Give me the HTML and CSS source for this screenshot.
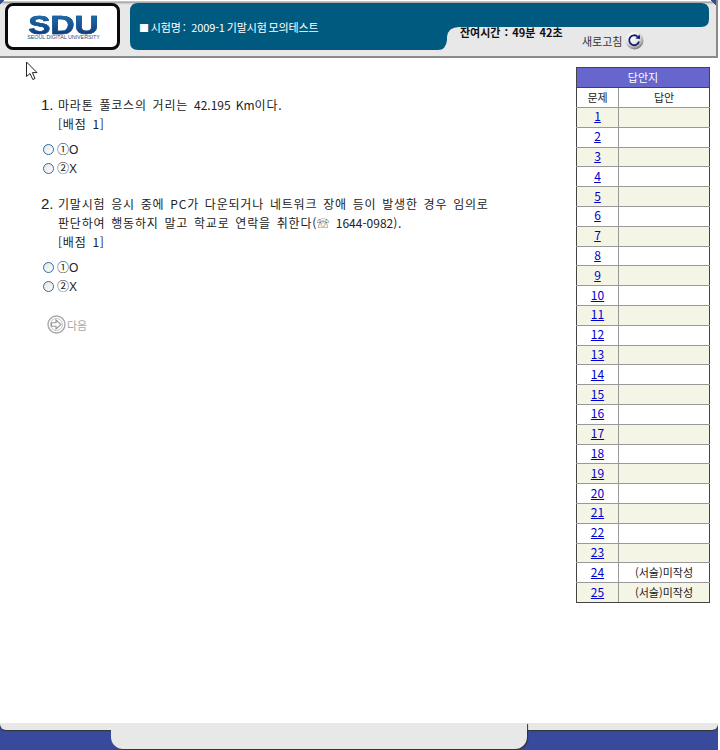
FILE: index.html
```html
<!DOCTYPE html>
<html lang="ko">
<head>
<meta charset="utf-8">
<title>시험</title>
<link rel="stylesheet" href="styles.css">
</head>
<body>
<div class="page">
  <header class="header">
    <div class="logo">
      <div class="logo-mark">SDU</div>
      <div class="logo-sub">SEOUL DIGITAL UNIVERSITY</div>
    </div>
    <div class="panel">
      <svg class="panel-shape" width="579" height="47" viewBox="0 0 579 47" aria-hidden="true">
        <path d="M8 0H571Q579 0 579 8V16Q579 24 571 24H329Q318 24 317 34V37Q316 47 308 47H8Q0 47 0 39V8Q0 0 8 0Z"/>
      </svg>
      <div class="exam-title"><span class="square">■</span> 시험명 :&nbsp;&nbsp; 2009-1 기말시험 모의테스트</div>
      <div class="status">
        <div class="timer">잔여시간 : 49분 42초</div>
        <div class="refresh">
          <span>새로고침</span>
          <svg width="20" height="20" viewBox="0 0 20 20" aria-hidden="true">
            <defs>
              <radialGradient id="ball" cx="38%" cy="28%" r="80%">
                <stop offset="0" stop-color="#ffffff"/>
                <stop offset=".5" stop-color="#e8e8e8"/>
                <stop offset=".8" stop-color="#a0a0a0"/>
                <stop offset="1" stop-color="#555555"/>
              </radialGradient>
            </defs>
            <circle cx="9.5" cy="9.5" r="9" fill="url(#ball)"/>
            <path d="M12.6 5.6A5 5 0 1 0 14 10.6" fill="none" stroke="#14206e" stroke-width="1.8"/>
            <path d="M10.4 7.4L15.2 8L14.6 3.6Z" fill="#14206e"/>
          </svg>
        </div>
      </div>
    </div>
  </header>

  <main class="main">
    <svg class="cursor" width="13" height="20" viewBox="0 0 13 20" aria-hidden="true">
      <path d="M1.5 1V15.5L5 12.5L7.8 18.5L10 17.5L7.4 11.6H12Z" fill="#fff" stroke="#222" stroke-width="1"/>
    </svg>
    <section class="questions">
      <div class="question">
        <div class="q-line">
          <span class="q-num">1.</span>
          <div class="q-text">마라톤 풀코스의 거리는 <span class="latin">42.195 Km</span>이다.<br>[배점 1]</div>
        </div>
        <label class="option"><input type="radio" name="q1"><span>①O</span></label>
        <label class="option"><input type="radio" name="q1"><span>②X</span></label>
      </div>
      <div class="question">
        <div class="q-line">
          <span class="q-num">2.</span>
          <div class="q-text">기말시험 응시 중에 PC가 다운되거나 네트워크 장애 등이 발생한 경우 임의로<br>판단하여 행동하지 말고 학교로 연락을 취한다(☏ <span class="latin">1644-0982</span>).<br>[배점 1]</div>
        </div>
        <label class="option"><input type="radio" name="q2"><span>①O</span></label>
        <label class="option"><input type="radio" name="q2"><span>②X</span></label>
      </div>
      <div class="next">
        <svg width="19" height="19" viewBox="0 0 19 19" aria-hidden="true">
          <circle cx="9.5" cy="9.5" r="8.5" fill="#fff" stroke="#a8a8a8" stroke-width="1.4"/>
          <circle cx="9.5" cy="9.5" r="6" fill="none" stroke="#c4c4c4" stroke-width="1"/>
          <path d="M4.5 7.8H9V5L14 9.5L9 14V11.2H4.5Z" fill="#fff" stroke="#999" stroke-width="1.1"/>
        </svg>
        <span>다음</span>
      </div>
    </section>

    <table class="answers">
      <colgroup><col class="col-no"><col class="col-ans"></colgroup>
      <thead>
        <tr class="title"><th colspan="2">답안지</th></tr>
        <tr class="heads"><th>문제</th><th>답안</th></tr>
      </thead>
      <tbody>
        <tr><td><a href="#">1</a></td><td></td></tr>
        <tr><td><a href="#">2</a></td><td></td></tr>
        <tr><td><a href="#">3</a></td><td></td></tr>
        <tr><td><a href="#">4</a></td><td></td></tr>
        <tr><td><a href="#">5</a></td><td></td></tr>
        <tr><td><a href="#">6</a></td><td></td></tr>
        <tr><td><a href="#">7</a></td><td></td></tr>
        <tr><td><a href="#">8</a></td><td></td></tr>
        <tr><td><a href="#">9</a></td><td></td></tr>
        <tr><td><a href="#">10</a></td><td></td></tr>
        <tr><td><a href="#">11</a></td><td></td></tr>
        <tr><td><a href="#">12</a></td><td></td></tr>
        <tr><td><a href="#">13</a></td><td></td></tr>
        <tr><td><a href="#">14</a></td><td></td></tr>
        <tr><td><a href="#">15</a></td><td></td></tr>
        <tr><td><a href="#">16</a></td><td></td></tr>
        <tr><td><a href="#">17</a></td><td></td></tr>
        <tr><td><a href="#">18</a></td><td></td></tr>
        <tr><td><a href="#">19</a></td><td></td></tr>
        <tr><td><a href="#">20</a></td><td></td></tr>
        <tr><td><a href="#">21</a></td><td></td></tr>
        <tr><td><a href="#">22</a></td><td></td></tr>
        <tr><td><a href="#">23</a></td><td></td></tr>
        <tr><td><a href="#">24</a></td><td>(서술)미작성</td></tr>
        <tr><td><a href="#">25</a></td><td>(서술)미작성</td></tr>
      </tbody>
    </table>
  </main>

  <footer class="footer">
    <div class="footer-strip"></div>
    <div class="footer-tab"></div>
  </footer>
</div>
</body>
</html>
```

FILE: styles.css
```css
* { box-sizing: border-box; }

html, body {
  margin: 0;
  padding: 0;
  background: #fff;
}

body {
  font-family: "Noto Sans CJK KR", "Liberation Sans", sans-serif;
  font-size: 12px;
  color: #222;
}

.page {
  width: 718px;
  height: 750px;
  display: flex;
  flex-direction: column;
  overflow: hidden;
}

/* Header */
.header {
  height: 58px;
  flex: none;
  display: flex;
  gap: 10px;
  padding: 3px 7px 0 5px;
  background:
    linear-gradient(135deg, #384a9c 3px, transparent 3px),
    linear-gradient(225deg, #384a9c 4px, transparent 4px),
    linear-gradient(#fff 0, #fff 1px, #8a8a8a 2px, #c8c8c8 3px, #e8e8e8 5px);
  border-right: 2px solid #8a8a8a;
  border-bottom: 2px solid #8a8a8a;
}

.logo {
  width: 115px;
  height: 47px;
  flex: none;
  background: #fff;
  border: 3px solid #0b0b0b;
  border-radius: 8px;
  display: flex;
  flex-direction: column;
  align-items: center;
  padding-top: 9px;
}

.logo-mark {
  font-family: "Liberation Sans", sans-serif;
  font-weight: 700;
  font-size: 26px;
  line-height: 20px;
  height: 20px;
  margin-left: 2px;
  background: linear-gradient(#1c6fae, #123a78);
  -webkit-background-clip: text;
  background-clip: text;
  color: transparent;
  transform: scaleX(1.28);
  -webkit-text-stroke: .6px #17548f;
}

.logo-sub {
  font-family: "Liberation Sans", sans-serif;
  font-size: 5.3px;
  line-height: 5px;
  margin-top: 0;
  margin-left: 2px;
  color: #1c4f86;
  white-space: nowrap;
}

.panel {
  position: relative;
  width: 579px;
  height: 47px;
  flex: none;
  display: flex;
  color: #fff;
}

.panel-shape {
  position: absolute;
  inset: 0;
  fill: #005a80;
}

.exam-title {
  position: relative;
  width: 330px;
  flex: none;
  padding: 16px 0 0 9px;
  line-height: 16px;
  white-space: nowrap;
  word-spacing: -1px;
  letter-spacing: -.15px;
  font-size: 11px;
}

.square {
  font-size: 10px;
}

.status {
  position: relative;
  flex: 1;
  display: flex;
  color: #111;
  white-space: nowrap;
}

.timer {
  margin-top: 22px;
  line-height: 14px;
  font-weight: 700;
  font-size: 11px;
  word-spacing: 1px;
  width: 122px;
  flex: none;
}

.refresh {
  align-self: flex-end;
  display: flex;
  align-items: center;
  gap: 3px;
  margin-bottom: -1px;
  color: #333;
  font-size: 11px;
}

/* Main */
.main {
  position: relative;
  flex: 1;
  display: flex;
  align-items: flex-start;
  padding: 9px 8px 0 41px;
}

.cursor {
  position: absolute;
  left: 25px;
  top: 3px;
}

.questions {
  flex: 1;
  padding-top: 28px;
}

.question {
  margin-bottom: 16px;
}

.q-line {
  display: flex;
  margin-bottom: 7px;
}

.q-num {
  width: 17px;
  flex: none;
  font-size: 15px;
  line-height: 19px;
  font-family: "Liberation Sans", sans-serif;
}

.q-text {
  font-size: 12px;
  line-height: 19px;
  letter-spacing: .8px;
  word-spacing: 1.7px;
  white-space: nowrap;
}

.latin {
  letter-spacing: 0;
}

.option {
  display: flex;
  align-items: center;
  gap: 3px;
  margin-left: 2px;
  height: 19px;
  line-height: 19px;
}

.option span {
  font-family: "Liberation Sans", "Noto Sans CJK KR", sans-serif;
  padding-top: 2px;
}

.option input {
  appearance: none;
  margin: 0;
  width: 11px;
  height: 11px;
  border: 1px solid #2f6ba5;
  border-radius: 50%;
  background: linear-gradient(135deg, #e4e4e0, #fff);
}

.next {
  display: flex;
  align-items: center;
  gap: 1px;
  margin: 19px 0 0 6px;
  color: #a8a8a8;
  font-size: 11px;
}

/* Answer sheet */
.answers {
  width: 133px;
  height: 536px;
  flex: none;
  border-collapse: collapse;
  table-layout: fixed;
  border: 1px solid #444;
  font-size: 11px;
  text-align: center;
}

.col-no { width: 42px; }
.col-ans { width: 91px; }

.answers th,
.answers td {
  border: 1px solid #999;
  padding: 0 0 2px;
  font-weight: 400;
  line-height: 14px;
}

.answers thead th {
  height: 20px;
}

.answers tbody td {
  height: 19px;
}

.title th {
  background: #6666cc;
  color: #fff;
  border-color: #444;
}

.heads th {
  background: #fff;
  color: #222;
}

.answers tbody tr:nth-child(odd) td {
  background: #f5f5e6;
}

.answers tbody tr:last-child td {
  border-bottom-color: #444;
}

.answers tr > :last-child {
  border-right-color: #444;
}

.answers tr > :first-child {
  border-left-color: #444;
}

.answers a {
  color: #0000cc;
  font-size: 12px;
}

/* Footer */
.footer {
  height: 27px;
  flex: none;
  display: grid;
  background: #384a9c;
}

.footer-strip,
.footer-tab {
  grid-area: 1 / 1;
}

.footer-strip {
  height: 7px;
  background: #e8e8e8;
  border-radius: 0 0 6px 6px;
  box-shadow: 0 1px 1px #333;
}

.footer-tab {
  width: 416px;
  height: 26px;
  margin-left: 111px;
  background: #e8e8e8;
  border-radius: 0 0 12px 12px;
  box-shadow: 1px 1px 1px #333;
}
```
